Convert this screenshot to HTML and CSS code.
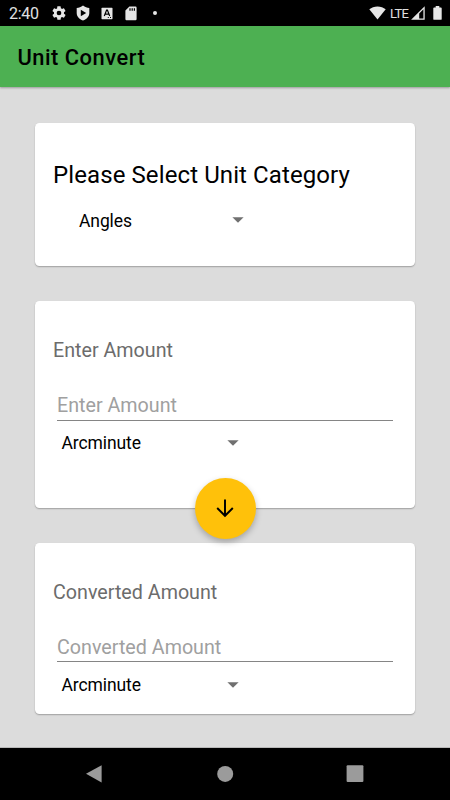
FILE: index.html
```html
<!DOCTYPE html>
<html lang="en">
<head>
<meta charset="utf-8">
<title>Unit Convert</title>
<link rel="stylesheet" href="styles.css">
</head>
<body>
<div class="status-bar">
  <span class="clock">2:40</span>
  <svg class="gear" width="16" height="16" viewBox="0 0 24 24"><path d="M19.4 13c0-.3.1-.6.1-1s0-.7-.1-1l2.100-1.650c.2-.15.25-.42.12-.64l-2-3.460c-.12-.22-.39-.3-.61-.22l-2.490 1c-.52-.4-1.080-.73-1.690-.98l-.38-2.650A.49.49 0 0 0 14 2h-4c-.25 0-.46.18-.49.42l-.38 2.650c-.61.25-1.170.59-1.690.98l-2.490-1c-.23-.09-.49 0-.61.22l-2 3.460c-.13.22-.07.49.12.64L4.570 11c-.04.32-.07.650-.07 1s.03.66.07 1l-2.110 1.650c-.19.15-.24.42-.12.640l2 3.460c.12.22.39.3.61.22l2.490-1c.52.4 1.080.73 1.690.98l.38 2.650c.03.24.24.42.49.42h4c.25 0 .46-.18.49-.42l.38-2.650c.61-.25 1.170-.59 1.690-.98l2.490 1c.23.09.49 0 .61-.22l2-3.460c.12-.22.07-.49-.12-.640zM12 15.500a3.500 3.500 0 1 1 0-7 3.500 3.500 0 0 1 0 7z"/></svg>
  <svg class="shield" width="14" height="16" viewBox="0 0 14 16"><path fill-rule="evenodd" d="M7 .5C5 2 3 2.800.7 3v5c0 3.500 2.500 6 6.300 7.500C10.800 14 13.300 11.500 13.300 8V3C11 2.800 9 2 7 .5zM4.800 4.800v6.400L10.200 8z"/></svg>
  <svg class="letter-box" width="12" height="13" viewBox="0 0 12 13"><rect x=".5" y=".8" width="11" height="11.400" rx=".6"/><path class="cut" d="M3.300 9 5.600 3h.8L8.700 9M4.200 7.200h3.600M6.800 10.500h1M9 10.500h1"/></svg>
  <svg class="sd" width="12" height="15" viewBox="0 0 12 15"><path fill-rule="evenodd" d="M4.400.6h6.100q1.100 0 1.100 1.100v11.400q0 1.200-1.100 1.200h-9q-1.100 0-1.100-1.200V4.600zM4.400 2.200v2.600h1.200V2.200zm2.200 0v2.600h1.200V2.200zm2.200 0v2.600H10V2.200z"/></svg>
  <span class="dot"></span>
  <span class="spacer"></span>
  <svg class="wifi" width="17" height="14" viewBox="0 0 17 14"><path d="M8.500 13.500.3 3.300C2.500 1.500 5.300.4 8.500.4s6 1.100 8.200 2.900z"/></svg>
  <span class="lte">LTE</span>
  <svg class="signal" width="14" height="14" viewBox="0 0 14 14"><path fill-rule="evenodd" d="M13.700.2v13.600H.1zM12.400 3.300 8.200 7.500v5h4.200z"/></svg>
  <svg class="battery" width="9" height="14" viewBox="0 0 9 14"><path d="M2.700.1h3.600v1.300h1.500q.9 0 .9.900v10.600q0 .9-.9.900H1.200q-.9 0-.9-.9V2.300q0-.9.9-.9h1.500z"/></svg>
</div>
<header class="app-bar"><h1>Unit Convert</h1></header>
<main class="content">
  <section class="card category-card">
    <h2>Please Select Unit Category</h2>
    <div class="spinner category-spinner"><span class="value">Angles</span><svg class="caret" width="12" height="6" viewBox="0 0 12 6"><path d="M.4.2h11.200L6 5.800z"/></svg></div>
  </section>
  <section class="card amount-card">
    <label for="amount">Enter Amount</label>
    <input id="amount" type="text" placeholder="Enter Amount">
    <div class="spinner"><span class="value">Arcminute</span><svg class="caret" width="12" height="6" viewBox="0 0 12 6"><path d="M.4.2h11.200L6 5.800z"/></svg></div>
    <button class="fab" type="button" aria-label="Convert"><svg width="26" height="26" viewBox="0 0 24 24"><path d="M12 4.200v15M4.800 12l7.200 7.200 7.200-7.200"/></svg></button>
  </section>
  <section class="card result-card">
    <label for="result">Converted Amount</label>
    <input id="result" type="text" placeholder="Converted Amount">
    <div class="spinner"><span class="value">Arcminute</span><svg class="caret" width="12" height="6" viewBox="0 0 12 6"><path d="M.4.2h11.200L6 5.800z"/></svg></div>
  </section>
</main>
<nav class="nav-bar">
  <svg width="18" height="20" viewBox="0 0 18 20"><path d="M16.600 1.200v17.200L1 9.800z"/></svg>
  <svg width="18" height="20" viewBox="0 0 18 20"><circle cx="9.200" cy="9.900" r="8"/></svg>
  <svg width="18" height="20" viewBox="0 0 18 20"><rect x=".6" y="1.200" width="16.800" height="16.800" rx="1"/></svg>
</nav>
</body>
</html>
```
FILE: styles.css
```css
* { box-sizing: border-box; }
body {
  margin: 0;
  width: 450px;
  height: 800px;
  overflow: hidden;
  display: flex;
  flex-direction: column;
  background: #dcdcdc;
  color: #000;
  font-family: Roboto, "Liberation Sans", sans-serif;
}
svg { display: block; flex: none; }
.status-bar {
  height: 26px;
  flex: none;
  display: flex;
  align-items: center;
  padding: 0 8px 0 9px;
  background: #000;
  color: #e0e0e0;
  fill: #e6e6e6;
}
.clock { width: 41.5px; font-size: 16px; line-height: 26px; padding-top: 2px; letter-spacing: -0.3px; }
.shield { margin-left: 9px; }
.letter-box { margin-left: 11px; }
.cut { fill: none; stroke: #000; stroke-width: 1.2; }
.sd { margin-left: 12px; }
.dot { width: 4px; height: 4px; border-radius: 50%; background: #e6e6e6; margin-left: 16.5px; }
.spacer { flex: 1; }
.lte { margin-left: 4px; width: 21px; font-size: 13px; letter-spacing: -0.7px; }
.battery { margin-left: 8px; }
.app-bar {
  height: 61px;
  flex: none;
  display: flex;
  align-items: center;
  padding: 2px 17.5px 0;
  background: #4db052;
  box-shadow: 0 1px 2px rgba(0, 0, 0, 0.3);
}
h1 { margin: 0; font-size: 21.9px; line-height: 28px; font-weight: 500; letter-spacing: 0.5px; }
.content {
  flex: 1;
  display: flex;
  flex-direction: column;
  gap: 35px;
  padding: 36px 35px 0;
}
.card {
  position: relative;
  display: flex;
  flex-direction: column;
  flex: none;
  padding: 36px 18px 0;
  background: #fff;
  border-radius: 4.4px;
  box-shadow: 0 1px 1.5px rgba(0, 0, 0, 0.28);
}
.category-card { height: 143px; padding-top: 35px; }
.amount-card { height: 207px; }
.result-card { height: 171px; }
h2 { margin: 0; font-size: 24px; line-height: 34px; font-weight: 400; letter-spacing: 0.1px; white-space: nowrap; }
label { font-size: 19.7px; line-height: 28px; color: #6c6c6c; }
input {
  height: 33px;
  margin: 22px 4px 0;
  padding: 5px 0 0;
  border: 0;
  border-bottom: 1px solid #858585;
  border-radius: 0;
  outline: 0;
  background: none;
  font: 19.7px Roboto, "Liberation Sans", sans-serif;
}
.amount-card input { height: 34px; padding-top: 3px; }
input::placeholder { color: #a0a0a0; opacity: 1; }
.spinner {
  display: flex;
  align-items: center;
  height: 26px;
  margin: 10px 0 0 8.5px;
  font-size: 17.5px;
  letter-spacing: -0.1px;
}
.amount-card .spinner { margin-top: 9px; }
.category-spinner { margin: 15px 0 0 26px; }
.value { width: 165.5px; line-height: 26px; }
.category-spinner .value { width: 153px; padding-top: 1px; }
.caret { fill: #707070; }
.fab {
  position: absolute;
  left: 50%;
  bottom: -31px;
  z-index: 1;
  width: 61px;
  height: 61px;
  margin-left: -30px;
  padding: 0 1px 1px 0;
  display: grid;
  place-items: center;
  border: 0;
  border-radius: 50%;
  background: #ffc10a;
  box-shadow: 0 3px 6px rgba(0, 0, 0, 0.26);
}
.fab path { fill: none; stroke: #000; stroke-width: 1.8; }
.nav-bar {
  height: 52px;
  flex: none;
  display: flex;
  justify-content: space-between;
  align-items: center;
  padding: 0 86px 0 85px;
  background: #000;
  box-shadow: 0 -1px 0 #b8b8b8;
  fill: #9b9b9b;
}
```
